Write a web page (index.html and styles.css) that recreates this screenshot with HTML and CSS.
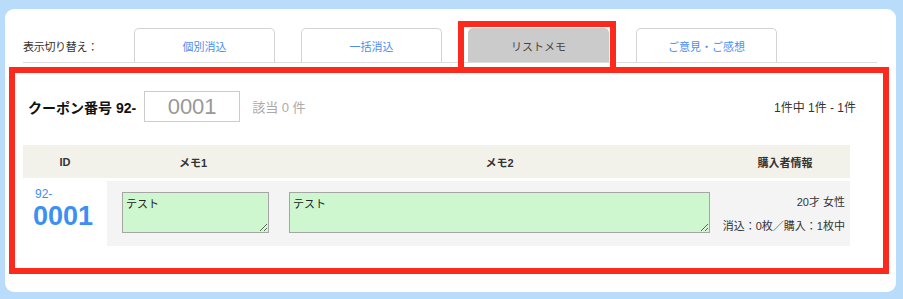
FILE: index.html
```html
<!DOCTYPE html>
<html lang="ja">
<head>
  <meta charset="UTF-8">
  <meta name="viewport" content="width=device-width, initial-scale=1.0">
  <title>リストメモ</title>
  <link rel="stylesheet" href="styles.css">
</head>
<body>
  <div class="card">
    <div class="tabs">
      <span class="tabs-label">表示切り替え：</span>
      <a class="tab" href="#">個別消込</a>
      <a class="tab" href="#">一括消込</a>
      <a class="tab tab-active" href="#">リストメモ</a>
      <a class="tab" href="#">ご意見・ご感想</a>
    </div>

    <div class="panel">
      <div class="search">
        <label class="search-label" for="coupon">クーポン番号 92-</label>
        <input class="search-input" type="text" id="coupon" placeholder="0001">
        <span class="search-hits">該当 0 件</span>
        <span class="search-count">1件中 1件 - 1件</span>
      </div>

      <div class="list">
        <div class="list-head">ID</div>
        <div class="list-head">メモ1</div>
        <div class="list-head">メモ2</div>
        <div class="list-head">購入者情報</div>

        <div class="cell cell-id">
          <span class="id-prefix">92-</span>
          <span class="id-num">0001</span>
        </div>
        <div class="cell cell-memo1">
          <textarea class="memo memo-short">テスト</textarea>
        </div>
        <div class="cell cell-memo2">
          <textarea class="memo memo-long">テスト</textarea>
        </div>
        <div class="cell cell-info">
          <span>20才 女性</span>
          <span>消込：0枚／購入：1枚中</span>
        </div>
      </div>
    </div>
  </div>
</body>
</html>
```

FILE: styles.css
```css
body {
  margin: 0;
  padding: 9px 7px 7px 5px;
  background-color: #b8dcf9;
  font-family: "Liberation Sans", "Noto Sans CJK JP", sans-serif;
  color: #333;
}

.card {
  height: 283px;
  box-sizing: border-box;
  background-color: #fff;
  border-radius: 9px;
  padding-top: 19px;
}

.tabs {
  display: flex;
  align-items: flex-end;
  margin: 0 19px 0 18px;
  border-bottom: 1px solid #ddd;
  height: 34px;
}

.tabs-label {
  width: 111px;
  align-self: center;
  font-size: 11px;
  letter-spacing: -0.3px;
  color: #333;
  margin-top: 2px;
}

.tab {
  position: relative;
  width: 141px;
  height: 34px;
  box-sizing: border-box;
  margin-right: 26px;
  border: 1px solid #d4d4d4;
  border-bottom: none;
  border-radius: 5px 5px 0 0;
  display: flex;
  justify-content: center;
  align-items: center;
  font-size: 11px;
  color: #4b8ff0;
  text-decoration: none;
  background-color: #fff;
}

.tab-active {
  background-color: #cbcbcb;
  border-color: #cbcbcb;
  color: #444;
  margin-right: 27px;
}

/* annotation frame */
.tab-active::after {
  content: "";
  position: absolute;
  left: -11px;
  right: -8px;
  top: -8px;
  bottom: -11px;
  border: 6px solid #fb2a1c;
}

.panel {
  margin: 4px 7px 0 4px;
  height: 207px;
  box-sizing: border-box;
  border: 6px solid #fb2a1c;
  padding: 18px 0 0 8px;
}

.search {
  display: flex;
  align-items: center;
  padding-left: 5px;
  width: 828px;
}

.search-label {
  font-size: 14px;
  font-weight: bold;
  color: #111;
}

.search-input {
  width: 96px;
  height: 31px;
  box-sizing: border-box;
  margin-left: 8px;
  border: 1px solid #ccc;
  font-family: "Liberation Sans", sans-serif;
  font-size: 22px;
  text-align: center;
  padding: 0;
}

.search-input::placeholder {
  color: #999;
}

.search-hits {
  margin-left: 12px;
  font-size: 13px;
  color: #aaa;
}

.search-count {
  margin-left: auto;
  font-size: 12px;
  color: #333;
}

.list {
  display: grid;
  grid-template-columns: 84px 172px 441px 130px;
  grid-template-rows: 33px 65px;
  row-gap: 3px;
  margin-top: 23px;
}

.list-head {
  background-color: #f3f2ea;
  display: flex;
  align-items: center;
  justify-content: center;
  font-size: 11px;
  font-weight: bold;
  color: #333;
}

.cell {
  background-color: #f4f4f4;
  display: flex;
}

.cell-id {
  background-color: #fff;
  flex-direction: column;
  padding: 6px 0 0 10px;
  color: #3d8ff2;
}

.id-prefix {
  font-size: 12px;
  padding-left: 2px;
}

.id-num {
  font-size: 27px;
  font-weight: bold;
  line-height: 30px;
}

.cell-memo1 {
  padding: 11px 0 0 15px;
}

.cell-memo2 {
  padding: 11px 0 0 10px;
}

.memo {
  height: 41px;
  box-sizing: border-box;
  margin: 0;
  border: 1px solid #a5a5a5;
  background-color: #cef6cf;
  font-family: "Liberation Sans", "Noto Sans CJK JP", sans-serif;
  font-size: 11px;
  color: #222;
  padding: 2px 3px;
}

.memo-short {
  width: 147px;
}

.memo-long {
  width: 421px;
}

.cell-info {
  flex-direction: column;
  align-items: flex-end;
  padding: 12px 5px 0 0;
  font-size: 11px;
  color: #333;
  gap: 8px;
}
```
